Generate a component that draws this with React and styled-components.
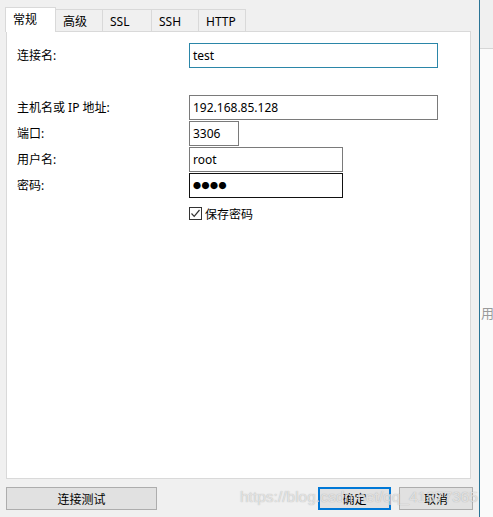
import React from "react";
import styled, { createGlobalStyle } from "styled-components";

const GlobalStyle = createGlobalStyle`
  html, body {
    margin: 0;
    padding: 0;
    background: #f0f0f0;
  }
  body {
    font-family: "Noto Sans", "Noto Sans CJK SC", sans-serif;
    font-size: 12px;
    color: #000;
  }
`;

const Screen = styled.div`
  display: flex;
  width: 493px;
  height: 517px;
  overflow: hidden;
  position: relative;
`;

const Dialog = styled.div`
  width: 479px;
  flex: none;
  padding: 7px 0 0 6px;
  box-sizing: border-box;
  display: flex;
  flex-direction: column;
`;

const TabBar = styled.div`
  display: flex;
  align-items: flex-end;
  height: 24px;
  margin-left: -1px;
`;

const Tab = styled.div`
  box-sizing: border-box;
  width: ${(p) => p.w}px;
  height: ${(p) => (p.active ? 25 : 22)}px;
  margin-bottom: ${(p) => (p.active ? -1 : 0)}px;
  background: ${(p) => (p.active ? "#fff" : "#f0f0f0")};
  border: 1px solid #d9d9d9;
  border-bottom: none;
  border-left: ${(p) => (p.first ? "1px solid #d9d9d9" : "none")};
  position: relative;
  z-index: ${(p) => (p.active ? 2 : 1)};
  display: flex;
  align-items: center;
  padding: ${(p) => (p.active ? "0 0 3px 7px" : "1px 0 0 7px")};
  font-size: 12px;
`;

const Panel = styled.div`
  box-sizing: border-box;
  width: 465px;
  height: 448px;
  background: #fff;
  border: 1px solid #d9d9d9;
  padding: 11px 0 0 10px;
  position: relative;
  z-index: 1;
`;

const Form = styled.div`
  display: grid;
  grid-template-columns: 172px 1fr;
  row-gap: 1px;
  align-items: center;
`;

const Label = styled.div`
  font-size: 12px;
  line-height: 24px;
  margin-top: ${(p) => p.gap || 0}px;
`;

const Field = styled.div`
  box-sizing: border-box;
  width: ${(p) => p.w}px;
  height: 25px;
  margin-top: ${(p) => p.gap || 0}px;
  border: 1px solid ${(p) => (p.focus ? "#2b86a8" : p.dark ? "#111" : "#7a7a7a")};
  padding: 0 0 0 3px;
  display: flex;
  align-items: center;
  font-size: ${(p) => (p.secret ? 8 : 12)}px;
  letter-spacing: ${(p) => (p.secret ? "0.5px" : "0")};
  background: #fff;
`;

const CheckRow = styled.label`
  grid-column: 2;
  display: flex;
  align-items: center;
  gap: 3px;
  margin-top: 6px;
  font-size: 12px;
  font-family: "Noto Sans CJK SC", sans-serif;
`;

const Box = styled.span`
  box-sizing: border-box;
  width: 13px;
  height: 13px;
  border: 1px solid #333;
  display: flex;
  align-items: center;
  justify-content: center;
  background: #fff;
`;

const ButtonRow = styled.div`
  display: flex;
  width: 467px;
  margin-top: 8px;
  align-items: center;
`;

const Button = styled.div`
  box-sizing: border-box;
  width: ${(p) => p.w}px;
  height: 23px;
  margin-left: ${(p) => p.ml || 0}px;
  background: #e1e1e1;
  border: ${(p) => (p.primary ? "2px solid #0078d7" : "1px solid #adadad")};
  display: flex;
  align-items: center;
  justify-content: center;
  font-size: 12px;
  font-family: "Noto Sans CJK SC", sans-serif;
`;

const Side = styled.div`
  flex: 1;
  border-left: 1px solid #2a7496;
  background: #fafafa;
  display: flex;
  flex-direction: column;
  overflow: hidden;
`;

const SideTop = styled.div`
  height: 48px;
  background: #f0f0f0;
  border-bottom: 1px solid #d6d6d6;
`;

const SideText = styled.div`
  margin: 254px 0 0 1px;
  color: #9a9a9a;
  font-size: 13px;
  font-family: "Noto Sans CJK SC", sans-serif;
  white-space: nowrap;
`;

const Watermark = styled.div`
  position: absolute;
  left: 240px;
  top: 488px;
  font-family: "Liberation Sans", Arial, sans-serif;
  font-size: 15.5px;
  color: rgba(238, 238, 238, 0.8);
  text-shadow: 0 0 1px rgba(110, 110, 110, 0.55);
  pointer-events: none;
  white-space: nowrap;
  z-index: 5;
`;

const tabs = [
  { name: "常规", w: 51 },
  { name: "高级", w: 47 },
  { name: "SSL", w: 49 },
  { name: "SSH", w: 47 },
  { name: "HTTP", w: 47 },
];

export default function App() {
  return (
    <Screen>
      <GlobalStyle />
      <Dialog>
        <TabBar>
          {tabs.map((t, i) => (
            <Tab key={t.name} w={t.w} active={i === 0} first={i === 0}>
              {t.name}
            </Tab>
          ))}
        </TabBar>
        <Panel>
          <Form>
            <Label>连接名:</Label>
            <Field w={249} focus>test</Field>

            <Label gap={26}>主机名或 IP 地址:</Label>
            <Field w={249} gap={26}>192.168.85.128</Field>

            <Label>端口:</Label>
            <Field w={50}>3306</Field>

            <Label>用户名:</Label>
            <Field w={154}>root</Field>

            <Label>密码:</Label>
            <Field w={154} dark secret>●●●●</Field>

            <CheckRow>
              <Box>
                <svg width="11" height="11" viewBox="0 0 11 11">
                  <path d="M1.5 5.5 L4.2 8.3 L9.5 2" fill="none" stroke="#333" strokeWidth="1.2" />
                </svg>
              </Box>
              保存密码
            </CheckRow>
          </Form>
        </Panel>
        <ButtonRow>
          <Button w={151}>连接测试</Button>
          <Button w={73} ml={161} primary>确定</Button>
          <Button w={74} ml={8}>取消</Button>
        </ButtonRow>
      </Dialog>
      <Side>
        <SideTop />
        <SideText>用</SideText>
      </Side>
      <Watermark>https://blog.csdn.net/qq_41877365</Watermark>
    </Screen>
  );
}
